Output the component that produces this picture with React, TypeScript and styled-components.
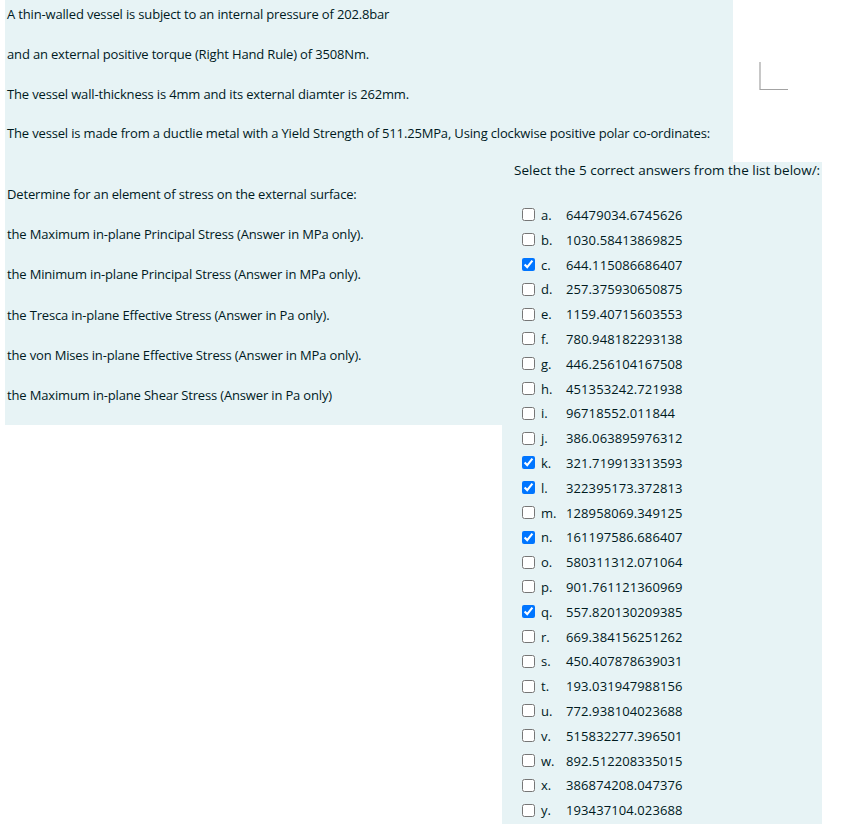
import React from "react";
import styled, { createGlobalStyle } from "styled-components";

const GlobalStyle = createGlobalStyle`
  html, body {
    margin: 0;
    padding: 0;
    background: #ffffff;
  }
  body {
    font-family: "Open Sans", "Noto Sans", sans-serif;
    font-size: 13px;
    color: #001a1e;
  }
`;

const panelBg = "#e7f3f5";

const Page = styled.div`
  padding-left: 5px;
  width: 838px;
  box-sizing: border-box;
`;

const TopRow = styled.div`
  display: flex;
  align-items: flex-start;
`;

const QuestionPanel = styled.div`
  width: 728px;
  height: 162px;
  box-sizing: border-box;
  padding: 4px 2px 0;
  background: ${panelBg};
`;

const Para = styled.p<{ $gap?: number }>`
  margin: 0 0 ${(p) => p.$gap ?? 20}px;
  line-height: 20px;
  letter-spacing: -0.16px;
  white-space: nowrap;
`;

const CornerMark = styled.svg`
  margin: 62px 0 0 26px;
  flex: none;
`;

const BottomRow = styled.div`
  display: flex;
  align-items: flex-start;
`;

const TaskPanel = styled.div`
  width: 497px;
  height: 263px;
  box-sizing: border-box;
  padding: 22px 2px 0;
  background: ${panelBg};
`;

const AnswerPanel = styled.div`
  width: 320px;
  box-sizing: border-box;
  padding: 0 0 20px;
  background: ${panelBg};
`;

const Prompt = styled.div`
  font-size: 13.5px;
  line-height: 16px;
  padding-left: 12px;
  white-space: nowrap;
`;

const OptionList = styled.div`
  margin-top: 24.6px;
  display: flex;
  flex-direction: column;
`;

const OptionRow = styled.label`
  display: flex;
  align-items: center;
  height: 24.8px;
  padding-left: 20px;
`;

const Box = styled.input`
  width: 13px;
  height: 13px;
  margin: 0 6px 0 0;
  flex: none;
`;

const Letter = styled.span`
  width: 25px;
  flex: none;
`;

const Value = styled.span`
  white-space: nowrap;
  letter-spacing: 0.1px;
`;

const questionLines = [
  "A thin-walled vessel is subject to an internal pressure of 202.8bar",
  "and an external positive torque (Right Hand Rule) of 3508Nm.",
  "The vessel wall-thickness is 4mm and its external diamter is 262mm.",
  "The vessel is made from a ductlie metal with a Yield Strength of 511.25MPa, Using clockwise positive polar co-ordinates:",
];

const taskLines = [
  "Determine for an element of stress on the external surface:",
  "the Maximum in-plane Principal Stress (Answer in MPa only).",
  "the Minimum in-plane Principal Stress (Answer in MPa only).",
  "the Tresca in-plane Effective Stress (Answer in Pa only).",
  "the von Mises in-plane Effective Stress (Answer in MPa only).",
  "the Maximum in-plane Shear Stress (Answer in Pa only)",
];

const options: [string, string, boolean][] = [
  ["a.", "64479034.6745626", false],
  ["b.", "1030.58413869825", false],
  ["c.", "644.115086686407", true],
  ["d.", "257.375930650875", false],
  ["e.", "1159.40715603553", false],
  ["f.", "780.948182293138", false],
  ["g.", "446.256104167508", false],
  ["h.", "451353242.721938", false],
  ["i.", "96718552.011844", false],
  ["j.", "386.063895976312", false],
  ["k.", "321.719913313593", true],
  ["l.", "322395173.372813", true],
  ["m.", "128958069.349125", false],
  ["n.", "161197586.686407", true],
  ["o.", "580311312.071064", false],
  ["p.", "901.761121360969", false],
  ["q.", "557.820130209385", true],
  ["r.", "669.384156251262", false],
  ["s.", "450.407878639031", false],
  ["t.", "193.031947988156", false],
  ["u.", "772.938104023688", false],
  ["v.", "515832277.396501", false],
  ["w.", "892.512208335015", false],
  ["x.", "386874208.047376", false],
  ["y.", "193437104.023688", false],
];

export default function App() {
  return (
    <Page>
      <GlobalStyle />
      <TopRow>
        <QuestionPanel>
          {questionLines.map((line) => (
            <Para key={line} $gap={19.8}>
              {line}
            </Para>
          ))}
        </QuestionPanel>
        <CornerMark width="30" height="29" viewBox="0 0 30 29">
          <polyline
            points="1,0 1,27.5 29,27.5"
            fill="none"
            stroke="#a3a3a3"
            strokeWidth="1.2"
          />
        </CornerMark>
      </TopRow>
      <BottomRow>
        <TaskPanel>
          {taskLines.map((line) => (
            <Para key={line} $gap={20.2}>
              {line}
            </Para>
          ))}
        </TaskPanel>
        <AnswerPanel>
          <Prompt>Select the 5 correct answers from the list below/:</Prompt>
          <OptionList>
            {options.map(([letter, value, checked]) => (
              <OptionRow key={letter}>
                <Box type="checkbox" defaultChecked={checked} />
                <Letter>{letter}</Letter>
                <Value>{value}</Value>
              </OptionRow>
            ))}
          </OptionList>
        </AnswerPanel>
      </BottomRow>
    </Page>
  );
}
